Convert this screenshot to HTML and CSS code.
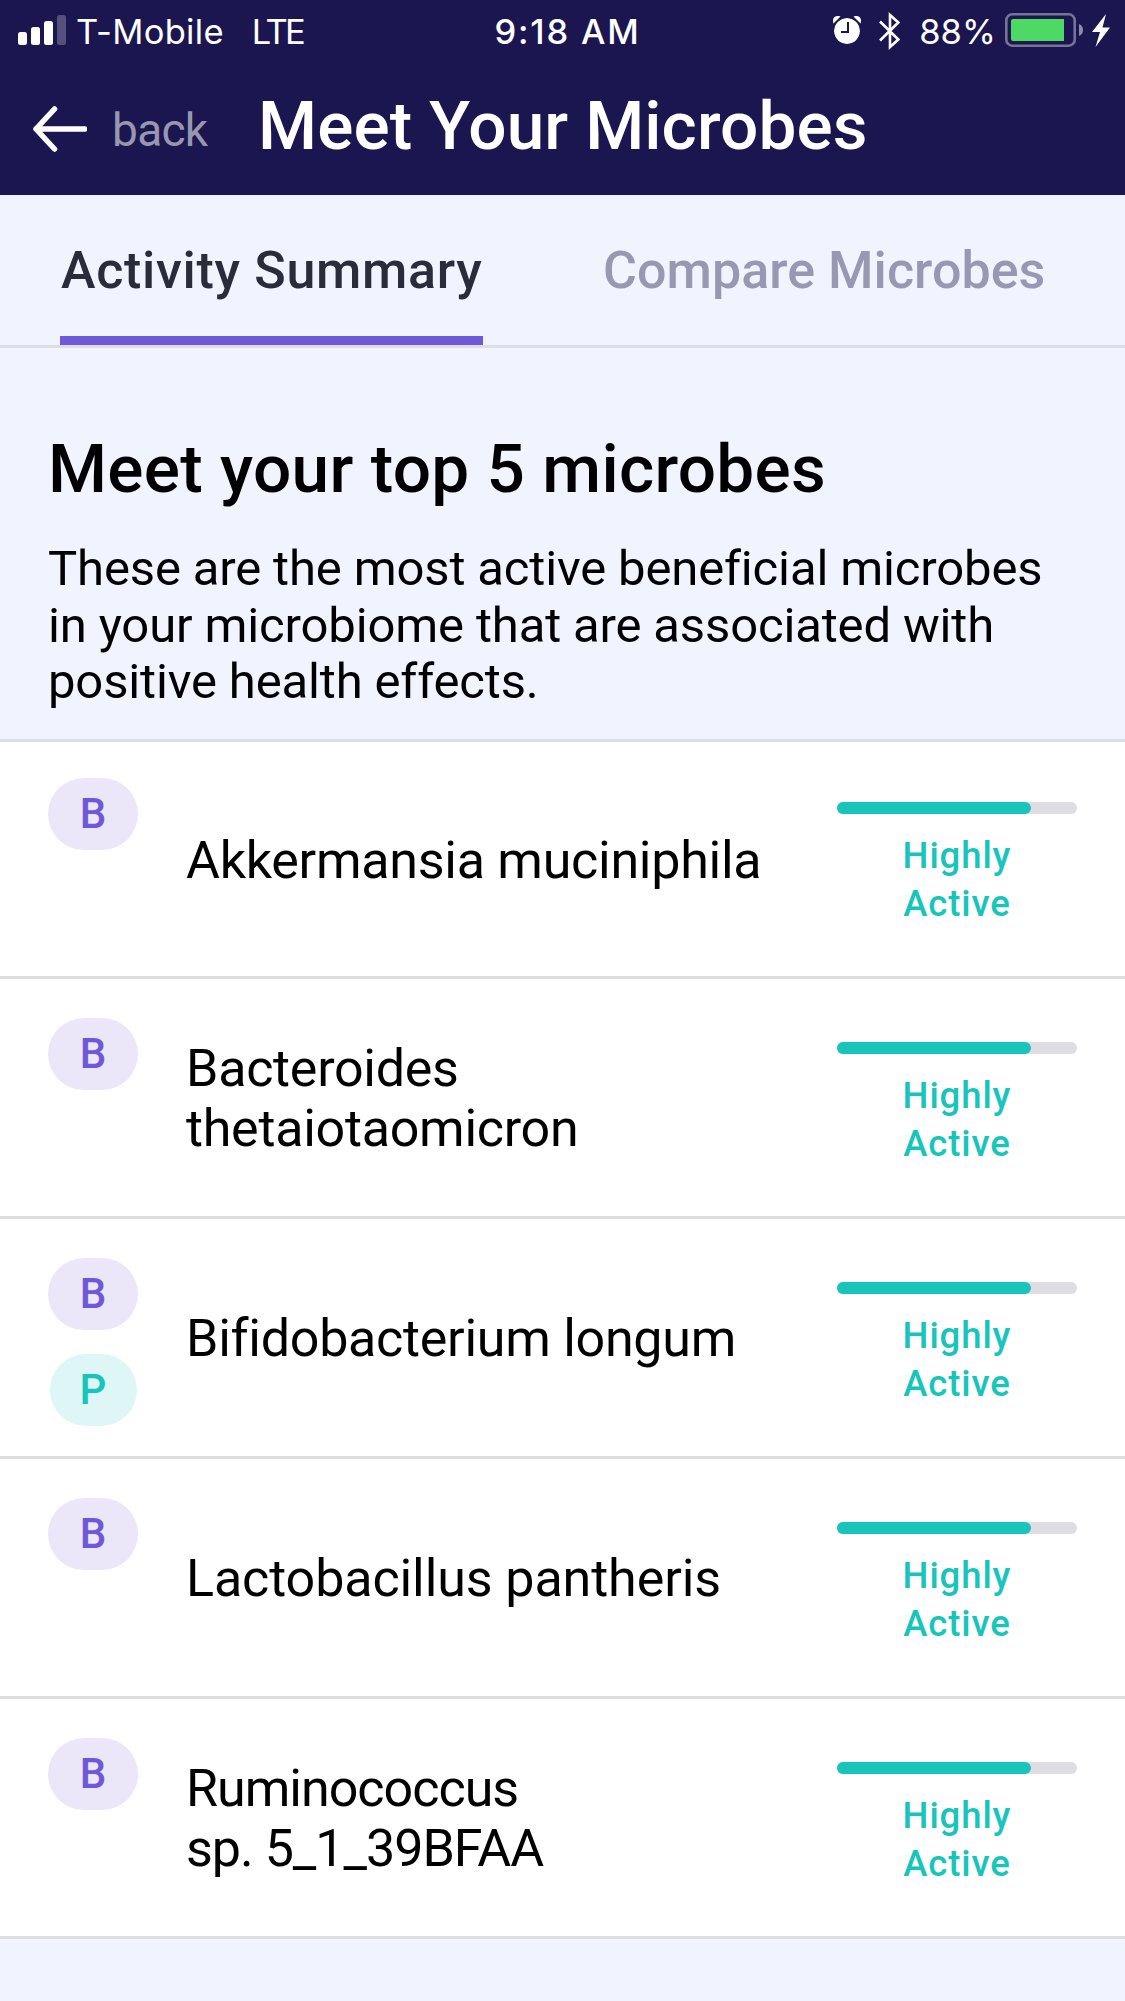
FILE: index.html
```
<!DOCTYPE html>
<html lang="en">
<head>
  <meta charset="utf-8">
  <title>Meet Your Microbes</title>
  <link rel="stylesheet" href="styles.css">
</head>
<body>
  <header class="header">
    <div class="status">
      <div class="status-left">
        <svg class="signal" width="48" height="30" viewBox="0 0 48 30" fill="#fff">
          <rect x="0" y="17" width="9" height="13" rx="2.5"/>
          <rect x="13" y="12" width="9" height="18" rx="2.5"/>
          <rect x="26" y="6" width="9" height="24" rx="2.5"/>
          <rect x="39" y="0" width="9" height="30" rx="2.5" opacity=".25"/>
        </svg>
        <span class="carrier">T-Mobile</span>
        <span class="network">LTE</span>
      </div>
      <div class="time">9:18 AM</div>
      <div class="status-right">
        <svg class="alarm" width="28" height="28" viewBox="0 0 28 28">
          <circle cx="14" cy="15" r="13" fill="#fff"/>
          <path d="M.5 7.500C-1.500 2 2.500-1.500 7.500.5Z M27.500 7.500C29.500 2 25.500-1.500 20.500.5Z" fill="#fff"/>
          <circle cx="14" cy="15" r="13.600" fill="none" stroke="#1c1650" stroke-width="1.200"/>
          <path d="M15 6v10H8" fill="none" stroke="#1c1650" stroke-width="2"/>
        </svg>
        <svg class="bluetooth" width="21" height="38" viewBox="0 0 21 38">
          <path d="M1 9.500 19.300 27.500 11 35V3L19.300 10.500 1 28.500" fill="none" stroke="#fff" stroke-width="2.600"/>
        </svg>
        <span class="percent">88%</span>
        <svg class="battery" width="79" height="36" viewBox="0 0 79 36">
          <rect x="1.300" y="1.300" width="68.400" height="31.400" rx="6" fill="none" stroke="#777396" stroke-width="2.600"/>
          <path d="M8 6H59V28H8Q6 28 6 26V8Q6 6 8 6Z" fill="#4cd964"/>
          <path d="M74 11Q78 12.500 78 17T74 23Z" fill="#8e8ba8"/>
        </svg>
        <svg class="bolt" width="18" height="33" viewBox="0 0 18 33">
          <path d="M14 0 0 18H8L3.500 33 18 13.500H10.500Z" fill="#fff"/>
        </svg>
      </div>
    </div>
    <div class="navbar">
      <svg class="arrow" width="54" height="46" viewBox="0 0 54 46">
        <path d="M21.500 3 3 23 21.500 43M3 23H52" fill="none" stroke="#fff" stroke-width="5.500" stroke-linecap="round" stroke-linejoin="round"/>
      </svg>
      <span class="back">back</span>
      <h1>Meet Your Microbes</h1>
    </div>
  </header>

  <nav class="tabs">
    <div class="tab active">Activity Summary</div>
    <div class="tab compare">Compare Microbes</div>
  </nav>

  <section class="intro">
    <h2>Meet your top 5 microbes</h2>
    <p>These are the most active beneficial microbes<br>in your microbiome that are associated with<br>positive health effects.</p>
  </section>

  <ul class="list">
    <li class="row">
      <div class="badges"><span class="badge b">B</span></div>
      <div class="name">Akkermansia muciniphila</div>
      <div class="activity"><div class="bar"><div class="fill" style="width: 81%"></div></div>Highly<br>Active</div>
    </li>
    <li class="row">
      <div class="badges"><span class="badge b">B</span></div>
      <div class="name">Bacteroides<br>thetaiotaomicron</div>
      <div class="activity"><div class="bar"><div class="fill" style="width: 81%"></div></div>Highly<br>Active</div>
    </li>
    <li class="row">
      <div class="badges"><span class="badge b">B</span><span class="badge p">P</span></div>
      <div class="name">Bifidobacterium longum</div>
      <div class="activity"><div class="bar"><div class="fill" style="width: 81%"></div></div>Highly<br>Active</div>
    </li>
    <li class="row">
      <div class="badges"><span class="badge b">B</span></div>
      <div class="name loose">Lactobacillus pantheris</div>
      <div class="activity"><div class="bar"><div class="fill" style="width: 81%"></div></div>Highly<br>Active</div>
    </li>
    <li class="row">
      <div class="badges"><span class="badge b">B</span></div>
      <div class="name tight">Ruminococcus<br>sp. 5_1_39BFAA</div>
      <div class="activity"><div class="bar"><div class="fill" style="width: 81%"></div></div>Highly<br>Active</div>
    </li>
  </ul>
</body>
</html>
```
FILE: styles.css
```
* { box-sizing: border-box; }
body {
  margin: 0;
  min-height: 2001px;
  background-color: #f1f3ff;
  color: #000;
  font-family: Roboto, sans-serif;
}
h1, h2, p, ul { margin: 0; padding: 0; }
svg { display: block; flex: none; }

/* header */
.header { height: 195px; background-color: #1c1650; color: #fff; }
.status {
  display: grid;
  grid-template-columns: 1fr auto 1fr;
  height: 63px;
  padding: 0 15px 0 18px;
  font-family: Inter, sans-serif;
  font-size: 34.5px;
  line-height: 63px;
}
.status-left, .status-right { display: flex; align-items: center; }
.status-right { justify-content: flex-end; }
.signal { margin-right: 10px; margin-top: -3px; }
.carrier { letter-spacing: 0.3px; }
.network { margin-left: 28px; letter-spacing: -2.6px; }
.time { padding-left: 7px; font-weight: 500; letter-spacing: 1.8px; }
.alarm { margin-top: -3px; margin-right: 18px; }
.bluetooth { margin-top: -2px; margin-right: 19px; }
.percent { margin-right: 9px; letter-spacing: 0.1px; }
.battery { margin-right: 8px; margin-top: -1px; }
.bolt { margin-top: -3px; }
.navbar {
  display: flex;
  align-items: center;
  height: 124px;
  padding-left: 33px;
}
.arrow { margin-top: 8px; margin-right: 25px; }
.back { width: 146px; padding-top: 9px; color: #9996b0; font-size: 46px; letter-spacing: -0.7px; }
h1 { font-size: 67.5px; font-weight: 500; letter-spacing: 0.1px; white-space: nowrap; }

/* tabs */
.tabs {
  display: flex;
  gap: 120px;
  height: 153px;
  padding-left: 60px;
  border-bottom: 3px solid #dedde3;
}
.tab {
  height: 150px;
  border-bottom: 9px solid transparent;
  padding-top: 10px;
  color: #9998b3;
  font-size: 52px;
  font-weight: 500;
  line-height: 132px;
  white-space: nowrap;
}
.active { width: 423px; border-color: #6f59d8; color: #2b2c3b; letter-spacing: 0.7px; padding-left: 1px; }
.compare { letter-spacing: 0.05px; }

/* intro */
.intro { height: 391px; padding: 81px 48px 0; }
h2 { font-size: 67.5px; font-weight: 500; line-height: 80px; letter-spacing: 0.3px; }
p { margin-top: 32px; font-size: 49px; line-height: 56.5px; letter-spacing: -0.15px; white-space: nowrap; }

/* microbe list */
.list { list-style: none; border-top: 3px solid #dedde3; }
.row {
  display: flex;
  height: 240px;
  padding: 0 48px;
  border-bottom: 3px solid #dedde3;
  background-color: #fff;
}
.badges {
  display: flex;
  flex-direction: column;
  align-items: center;
  gap: 24px;
  width: 90px;
  margin-right: 48px;
  padding-top: 39px;
}
.badge {
  width: 90px;
  height: 72px;
  border-radius: 36px;
  font-size: 42px;
  font-weight: 500;
  line-height: 71px;
  text-align: center;
}
.b { background-color: #ebe6f8; color: #6f59d8; }
.p { width: 87px; background-color: #def6f5; color: #17c5bb; }
.name {
  flex: 1;
  align-self: center;
  padding-top: 3px;
  font-size: 52px;
  line-height: 60px;
  letter-spacing: -0.27px;
  white-space: nowrap;
}
.loose { letter-spacing: -0.1px; }
.tight { letter-spacing: -1px; }
.activity {
  width: 240px;
  padding-top: 63px;
  color: #17c5bb;
  font-size: 36.5px;
  font-weight: 500;
  line-height: 48px;
  letter-spacing: 0.9px;
  text-align: center;
}
.bar {
  height: 12px;
  margin-bottom: 18px;
  border-radius: 6px;
  background-color: #dedde3;
}
.fill { height: 12px; border-radius: 6px; background-color: #17c5bb; }

/* the first row sits right under the list border */
.row:first-child { height: 237px; }
.row:first-child .badges { padding-top: 36px; }
.row:first-child .activity { padding-top: 60px; }
```
